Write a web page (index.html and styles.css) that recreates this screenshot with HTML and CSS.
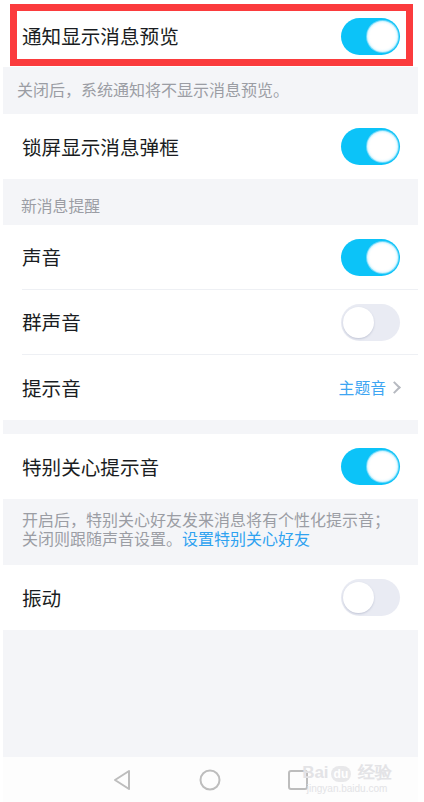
FILE: index.html
```html
<html>
    <head>
        <title>消息通知</title>
        <link rel="stylesheet" href="styles.css">
    </head>
    <body>
        <div class="screen">
            <div class="group">
                <div class="item first">
                    <span class="label">通知显示消息预览</span>
                    <span class="switch on"></span>
                </div>
            </div>
            <div class="note note-top">关闭后，系统通知将不显示消息预览。</div>

            <div class="group">
                <div class="item">
                    <span class="label">锁屏显示消息弹框</span>
                    <span class="switch on"></span>
                </div>
            </div>

            <div class="section">新消息提醒</div>
            <div class="group">
                <div class="item">
                    <span class="label">声音</span>
                    <span class="switch on"></span>
                </div>
                <div class="item">
                    <span class="label">群声音</span>
                    <span class="switch"></span>
                </div>
                <div class="item">
                    <span class="label">提示音</span>
                    <span class="value">主题音<span class="chev"></span></span>
                </div>
            </div>

            <div class="gap"></div>
            <div class="group">
                <div class="item">
                    <span class="label">特别关心提示音</span>
                    <span class="switch on"></span>
                </div>
            </div>
            <div class="note note-two">
                <div class="line">开启后，特别关心好友发来消息将有个性化提示音；</div>
                <div class="line">关闭则跟随声音设置。<a href="#">设置特别关心好友</a></div>
            </div>

            <div class="group">
                <div class="item">
                    <span class="label">振动</span>
                    <span class="switch"></span>
                </div>
            </div>

            <div class="fill"></div>

            <div class="navbar">
                <svg width="22" height="24" viewBox="0 0 22 24"><path d="M18 3 L4 12 L18 21 Z" fill="none" stroke="#bdbdbd" stroke-width="2" stroke-linejoin="round"/></svg>
                <svg width="24" height="24" viewBox="0 0 24 24"><circle cx="12" cy="12" r="9.5" fill="none" stroke="#bdbdbd" stroke-width="2"/></svg>
                <svg width="22" height="22" viewBox="0 0 22 22"><rect x="2" y="2" width="18" height="18" rx="2" fill="none" stroke="#bdbdbd" stroke-width="2"/></svg>
            </div>

            <div class="mark">
                <div class="mark-top">Bai<span class="paw">du</span> 经验</div>
                <div class="mark-url">jingyan.baidu.com</div>
            </div>

            <div class="highlight"></div>
        </div>
    </body>
</html>
```
FILE: styles.css
```css
html, body {
    margin: 0;
    padding: 0;
    background: #ffffff;
}
body {
    width: 424px;
    height: 802px;
    font-family: "Noto Sans CJK SC", "Noto Sans", sans-serif;
}
.screen {
    position: relative;
    margin: 0 6px 0 3px;
    width: 415px;
    background: #f4f5f8;
    display: flex;
    flex-direction: column;
}
.group {
    background: #ffffff;
}
.item {
    height: 65px;
    margin-left: 19px;
    padding-right: 18px;
    display: flex;
    align-items: center;
    justify-content: space-between;
    border-bottom: 1px solid #eef0f4;
    box-sizing: border-box;
}
.item:last-child {
    border-bottom: none;
}
.item.first {
    height: 67px;
    padding-top: 5px;
}
.label {
    font-size: 19.6px;
    color: #1a1d22;
    line-height: 24px;
}
.switch {
    width: 59px;
    height: 37px;
    border-radius: 19px;
    background: #e9ebf3;
    position: relative;
    flex: none;
}
.switch::after {
    content: "";
    position: absolute;
    left: 2px;
    top: 3px;
    width: 31px;
    height: 31px;
    border-radius: 50%;
    background: #ffffff;
    box-shadow: 0 1px 2px rgba(120, 130, 160, 0.35);
}
.switch.on {
    background: #0cc3f8;
}
.switch.on::after {
    left: auto;
    right: 2px;
    box-shadow: 0 0 0 1px #6fd8fa, inset 0 0 3px rgba(12, 195, 248, 0.4);
}
.value {
    font-size: 15.8px;
    color: #3ea5f2;
    display: flex;
    align-items: center;
    margin-right: 1px;
}
.chev {
    width: 7px;
    height: 7px;
    border-top: 2px solid #b6b9c0;
    border-right: 2px solid #b6b9c0;
    transform: rotate(45deg);
    margin-left: 4px;
}
.note {
    font-size: 16px;
    color: #9b9da4;
}
.note-top {
    height: 47px;
    line-height: 22px;
    padding: 11px 0 0 14px;
    box-sizing: border-box;
}
.note-two {
    height: 66px;
    padding: 12px 10px 0 19px;
    box-sizing: border-box;
    font-family: "Liberation Sans", "Noto Sans CJK SC", sans-serif;
}
.note-two .line {
    height: 19px;
    line-height: 19px;
    white-space: nowrap;
}
.note-two a {
    color: #2fa2f0;
    text-decoration: none;
}
.section {
    height: 46px;
    line-height: 22px;
    padding: 16px 0 0 18px;
    box-sizing: border-box;
    font-size: 15.8px;
    color: #9b9da4;
}
.gap {
    height: 14px;
}
.fill {
    height: 127px;
}
.navbar {
    height: 45px;
    background: #fdfdfd;
    display: flex;
    align-items: center;
    padding-left: 108px;
    gap: 65px;
    margin-bottom: 2px;
}
.mark {
    position: absolute;
    right: 26px;
    bottom: 9px;
    color: #e3e3e6;
    text-align: center;
    font-family: "Liberation Sans", sans-serif;
}
.mark-top {
    font-size: 17px;
    font-weight: bold;
    line-height: 18px;
}
.paw {
    font-size: 12px;
    background: #e8e8ea;
    color: #ffffff;
    border-radius: 8px;
    padding: 1px 3px;
    margin: 0 2px;
}
.mark-url {
    font-size: 10px;
    line-height: 12px;
}
.highlight {
    position: absolute;
    left: 7px;
    top: 4px;
    width: 403px;
    height: 62px;
    border: 7px solid #fb3b3d;
    box-sizing: border-box;
}
```
